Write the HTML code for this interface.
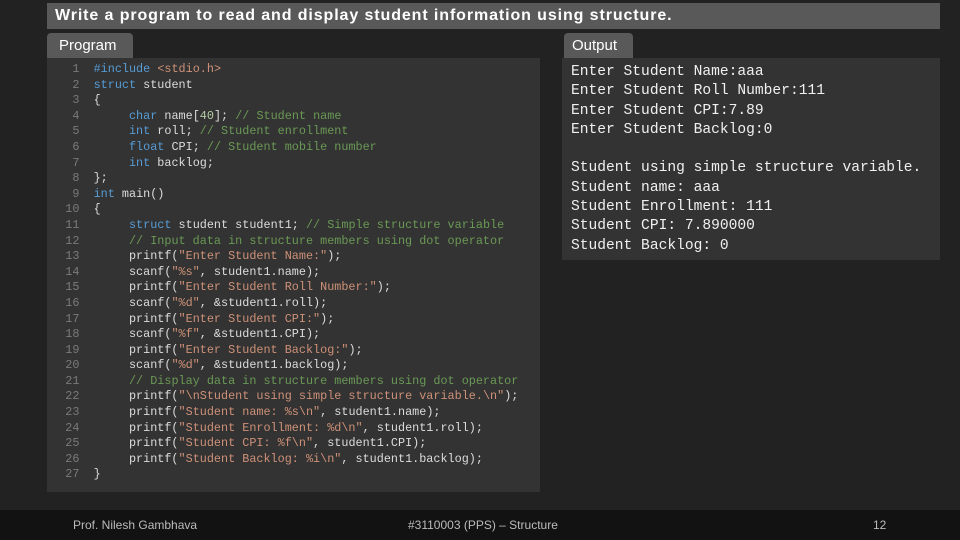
<!DOCTYPE html>
<html><head><meta charset="utf-8"><style>
*{margin:0;padding:0;box-sizing:border-box}
body{width:960px;height:540px;background:#222;position:relative;overflow:hidden;font-family:"Liberation Sans",sans-serif}
.title{position:absolute;left:47px;top:3px;width:893px;height:26px;background:#595959;color:#fff;font-weight:bold;font-size:16px;letter-spacing:0.9px;line-height:26px;padding-left:8px}
.tab{position:absolute;top:33px;height:26px;background:#595959;color:#fff;font-size:15px;line-height:26px;padding-left:12px;border-radius:4px 4px 0 0}
.code{position:absolute;left:47px;top:58px;width:493px;height:434px;background:#333}
.code pre{position:absolute;left:-3px;top:4px;font-family:"Liberation Mono",monospace;font-size:11.8px;line-height:15.6px;color:#dcdcdc;white-space:pre}
.ln{color:#7a7a7a}
.k{color:#569cd6}.c{color:#6a9955}.s{color:#ce9178}.n{color:#b5cea8}
.out{position:absolute;left:562px;top:58px;width:378px;height:202px;background:#333}
.out pre{position:absolute;left:9px;top:5px;font-family:"Liberation Mono",monospace;font-size:14.6px;line-height:19.3px;color:#f0f0f0;white-space:pre}
.foot{position:absolute;left:0;top:510px;width:960px;height:30px;background:#121212;color:#bbb;font-size:12px;line-height:30px}
</style></head><body>
<div class="title">Write a program to read and display student information using structure.</div>
<div class="tab" style="left:47px;width:86px">Program</div>
<div class="tab" style="left:564px;width:69px;padding-left:8px">Output</div>
<div class="code"><pre><span class="ln">    1</span>  <span class="k">#include</span> <span class="s">&lt;stdio.h&gt;</span>
<span class="ln">    2</span>  <span class="k">struct</span> student
<span class="ln">    3</span>  {
<span class="ln">    4</span>       <span class="k">char</span> name[<span class="n">40</span>]; <span class="c">// Student name</span>
<span class="ln">    5</span>       <span class="k">int</span> roll; <span class="c">// Student enrollment</span>
<span class="ln">    6</span>       <span class="k">float</span> CPI; <span class="c">// Student mobile number</span>
<span class="ln">    7</span>       <span class="k">int</span> backlog;
<span class="ln">    8</span>  };
<span class="ln">    9</span>  <span class="k">int</span> main()
<span class="ln">   10</span>  {
<span class="ln">   11</span>       <span class="k">struct</span> student student1; <span class="c">// Simple structure variable</span>
<span class="ln">   12</span>       <span class="c">// Input data in structure members using dot operator</span>
<span class="ln">   13</span>       printf(<span class="s">"Enter Student Name:"</span>);
<span class="ln">   14</span>       scanf(<span class="s">"%s"</span>, student1.name);
<span class="ln">   15</span>       printf(<span class="s">"Enter Student Roll Number:"</span>);
<span class="ln">   16</span>       scanf(<span class="s">"%d"</span>, &amp;student1.roll);
<span class="ln">   17</span>       printf(<span class="s">"Enter Student CPI:"</span>);
<span class="ln">   18</span>       scanf(<span class="s">"%f"</span>, &amp;student1.CPI);
<span class="ln">   19</span>       printf(<span class="s">"Enter Student Backlog:"</span>);
<span class="ln">   20</span>       scanf(<span class="s">"%d"</span>, &amp;student1.backlog);
<span class="ln">   21</span>       <span class="c">// Display data in structure members using dot operator</span>
<span class="ln">   22</span>       printf(<span class="s">"\nStudent using simple structure variable.\n"</span>);
<span class="ln">   23</span>       printf(<span class="s">"Student name: %s\n"</span>, student1.name);
<span class="ln">   24</span>       printf(<span class="s">"Student Enrollment: %d\n"</span>, student1.roll);
<span class="ln">   25</span>       printf(<span class="s">"Student CPI: %f\n"</span>, student1.CPI);
<span class="ln">   26</span>       printf(<span class="s">"Student Backlog: %i\n"</span>, student1.backlog);
<span class="ln">   27</span>  }</pre></div>
<div class="out"><pre>Enter Student Name:aaa
Enter Student Roll Number:111
Enter Student CPI:7.89
Enter Student Backlog:0

Student using simple structure variable.
Student name: aaa
Student Enrollment: 111
Student CPI: 7.890000
Student Backlog: 0</pre></div>
<div class="foot"><span style="position:absolute;left:73px">Prof. Nilesh Gambhava</span><span style="position:absolute;left:408px">#3110003 (PPS) – Structure</span><span style="position:absolute;left:873px">12</span></div>
</body></html>
